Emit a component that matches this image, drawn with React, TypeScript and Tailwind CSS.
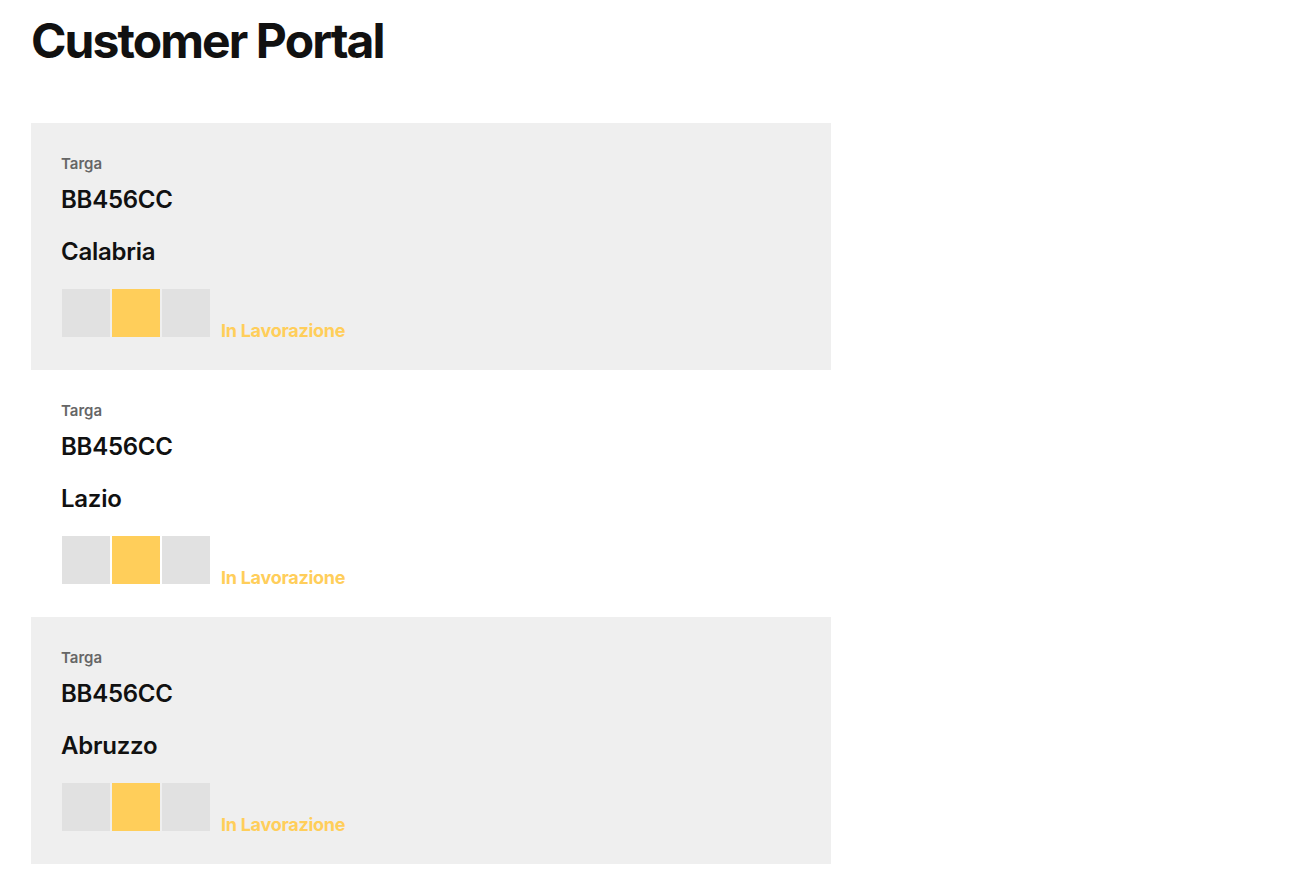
const orders = [
  { plate: 'BB456CC', region: 'Calabria', step: 1, status: 'In Lavorazione' },
  { plate: 'BB456CC', region: 'Lazio', step: 1, status: 'In Lavorazione' },
  { plate: 'BB456CC', region: 'Abruzzo', step: 1, status: 'In Lavorazione' },
];

export default function App() {
  return (
    <div className="min-h-screen bg-white px-[31px] pt-[13px] text-[#111] font-['Inter',sans-serif]">
      <h1 className="text-[48px] font-bold leading-[56px] tracking-[-0.04em]">Customer Portal</h1>

      <div className="mt-[54px] w-[800px]">
        {orders.map((o, i) => (
          <div
            key={o.region}
            className={`px-[30px] pt-[31px] pb-[33px] ${i % 2 === 0 ? 'bg-[#efefef]' : 'bg-white'}`}
          >
            <div className="text-[15px] font-semibold leading-5 text-[#666]">Targa</div>
            <div className="mt-[12px] text-[24px] font-semibold leading-7 tracking-[-0.01em]">{o.plate}</div>
            <div className="mt-[24px] text-[24px] font-semibold leading-7 tracking-[-0.01em]">{o.region}</div>

            {/* Progress */}
            <div className="mt-[23px] flex h-12 items-baseline">
              <div className="ml-px flex gap-[2px]">
                {[0, 1, 2].map((s) => (
                  <div
                    key={s}
                    className={`h-12 w-12 ${s === o.step ? 'bg-[#ffce5a]' : 'bg-[#e1e1e1]'}`}
                  />
                ))}
              </div>
              <span className="ml-[11px] text-[18px] font-bold leading-none tracking-[-0.015em] text-[#ffce5a]">{o.status}</span>
            </div>
          </div>
        ))}
      </div>
    </div>
  );
}
